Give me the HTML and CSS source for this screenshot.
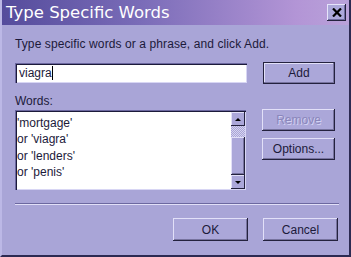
FILE: index.html
```html
<!doctype html>
<html lang="en">
<head>
  <meta charset="UTF-8">
  <title>Type Specific Words</title>
  <link rel="stylesheet" href="styles.css">
</head>
<body>
  <div class="window">
    <div class="titlebar">
      <span class="title">Type Specific Words</span>
      <button class="close" type="button" aria-label="Close">
        <svg width="10" height="9" viewBox="0 0 10 9"><path d="M1 0.5 L9 8.5 M9 0.5 L1 8.5" stroke="#000" stroke-width="2.2"/></svg>
      </button>
    </div>
    <div class="content">
      <p class="hint">Type specific words or a phrase, and click Add.</p>
      <div class="row">
        <div class="input"><span>viagra</span><span class="caret"></span></div>
        <button class="btn default" type="button">Add</button>
      </div>
      <p class="label">Words:</p>
      <div class="row">
        <div class="list">
          <ul>
            <li>'mortgage'</li>
            <li>or 'viagra'</li>
            <li>or 'lenders'</li>
            <li>or 'penis'</li>
          </ul>
          <div class="scroll">
            <div class="arrow up"></div>
            <div class="track"></div>
            <div class="thumb"></div>
            <div class="arrow down"></div>
          </div>
        </div>
        <div class="side">
          <button class="btn disabled" type="button">Remove</button>
          <button class="btn" type="button">Options...</button>
        </div>
      </div>
      <div class="separator"></div>
      <div class="actions">
        <button class="btn" type="button">OK</button>
        <button class="btn" type="button">Cancel</button>
      </div>
    </div>
  </div>
</body>
</html>
```

FILE: styles.css
```css
body {
  margin: 0;
  background: #a9a5d7;
  font-family: 'Liberation Sans', Arial, sans-serif;
  color: #1c1a3a;
}
.window {
  width: 351px;
  height: 257px;
  box-sizing: border-box;
  background: #a9a5d7;
  border-left: 2px solid #bcb8e6;
  border-right: 2px solid #2c2a52;
  border-bottom: 2px solid #2c2a52;
}
.titlebar {
  height: 25px;
  display: flex;
  align-items: center;
  justify-content: space-between;
  padding: 0 3px 0 4px;
  background: linear-gradient(to right, #554c9c, #7a6cb8 40%, #b395d6 85%, #b9a2da);
}
.title {
  color: #fff;
  font-family: 'DejaVu Sans', sans-serif;
  font-size: 16.5px;
}
.close {
  width: 19px;
  height: 17px;
  padding: 0;
  display: flex;
  align-items: center;
  justify-content: center;
  background: #aca8da;
  border: none;
  box-shadow: inset -1px -1px 0 #24223e, inset 1px 1px 0 #e6e4fa, inset -2px -2px 0 #6f6ba0;
}
.content {
  padding: 0 0 0 13px;
}
.hint {
  margin: 0;
  padding-top: 12px;
  height: 21px;
  font-size: 12px;
  letter-spacing: 0.1px;
}
.label {
  margin: 0;
  padding-top: 10px;
  height: 16px;
  font-size: 12px;
}
.row {
  display: flex;
  align-items: flex-start;
  gap: 16px;
}
.input {
  width: 232px;
  height: 20px;
  box-sizing: border-box;
  margin-top: 5px;
  background: #fff;
  display: flex;
  align-items: center;
  padding-left: 4px;
  font-size: 12px;
  box-shadow: inset 1px 1px 0 #6c68a0, inset 2px 2px 0 #1c1a3a, inset -1px -1px 0 #d8d6f4;
}
.caret {
  width: 1px;
  height: 14px;
  background: #000;
}
.btn {
  width: 73px;
  height: 22px;
  padding: 0;
  border: none;
  background: #aba7d9;
  font-family: 'Liberation Sans', Arial, sans-serif;
  font-size: 12px;
  color: #1c1a3a;
  box-shadow: inset -1px -1px 0 #24223e, inset 1px 1px 0 #e2e0f8, inset -2px -2px 0 #77739f;
}
.default {
  width: 72px;
  margin-top: 4px;
  box-shadow: inset 0 0 0 1px #24223e, inset -2px -2px 0 #77739f, inset 2px 2px 0 #e2e0f8;
}
.disabled {
  color: #8a86bb;
  text-shadow: 1px 1px 0 #d4d2f2;
}
.list {
  width: 231px;
  height: 80px;
  box-sizing: border-box;
  background: #fff;
  display: flex;
  padding: 2px 0 1px 2px;
  box-shadow: inset 1px 1px 0 #6c68a0, inset 2px 2px 0 #1c1a3a, inset -1px -1px 0 #d8d6f4;
}
.list ul {
  flex: 1;
  margin: 0;
  padding: 3px 0 0 0;
  list-style: none;
  font-size: 12px;
  line-height: 16.3px;
}
.scroll {
  width: 14px;
  display: flex;
  flex-direction: column;
  margin-right: 1px;
}
.arrow {
  height: 14px;
  background: #aba7d9;
  box-shadow: inset -1px -1px 0 #24223e, inset 1px 1px 0 #e2e0f8;
  display: flex;
  align-items: center;
  justify-content: center;
}
.arrow::after {
  content: "";
  border-left: 3px solid transparent;
  border-right: 3px solid transparent;
}
.up::after {
  border-bottom: 3px solid #000;
}
.down::after {
  border-top: 3px solid #000;
}
.track {
  height: 11px;
  background: repeating-conic-gradient(#d6d4f0 0 25%, #a9a5d7 0 50%) 0 0 / 2px 2px;
}
.thumb {
  flex: 1;
  background: #aba7d9;
  box-shadow: inset -1px -1px 0 #24223e, inset 1px 1px 0 #e2e0f8, inset -2px -2px 0 #77739f;
}
.side {
  display: flex;
  flex-direction: column;
  gap: 7px;
  margin-top: -1px;
}
.separator {
  width: 324px;
  margin-top: 13px;
  border-top: 1px solid #6c68a0;
  border-bottom: 1px solid #e2e0f8;
}
.actions {
  display: flex;
  justify-content: flex-end;
  gap: 15px;
  width: 323px;
  margin-top: 13px;
}
.actions .btn {
  width: 75px;
  height: 23px;
}
```
